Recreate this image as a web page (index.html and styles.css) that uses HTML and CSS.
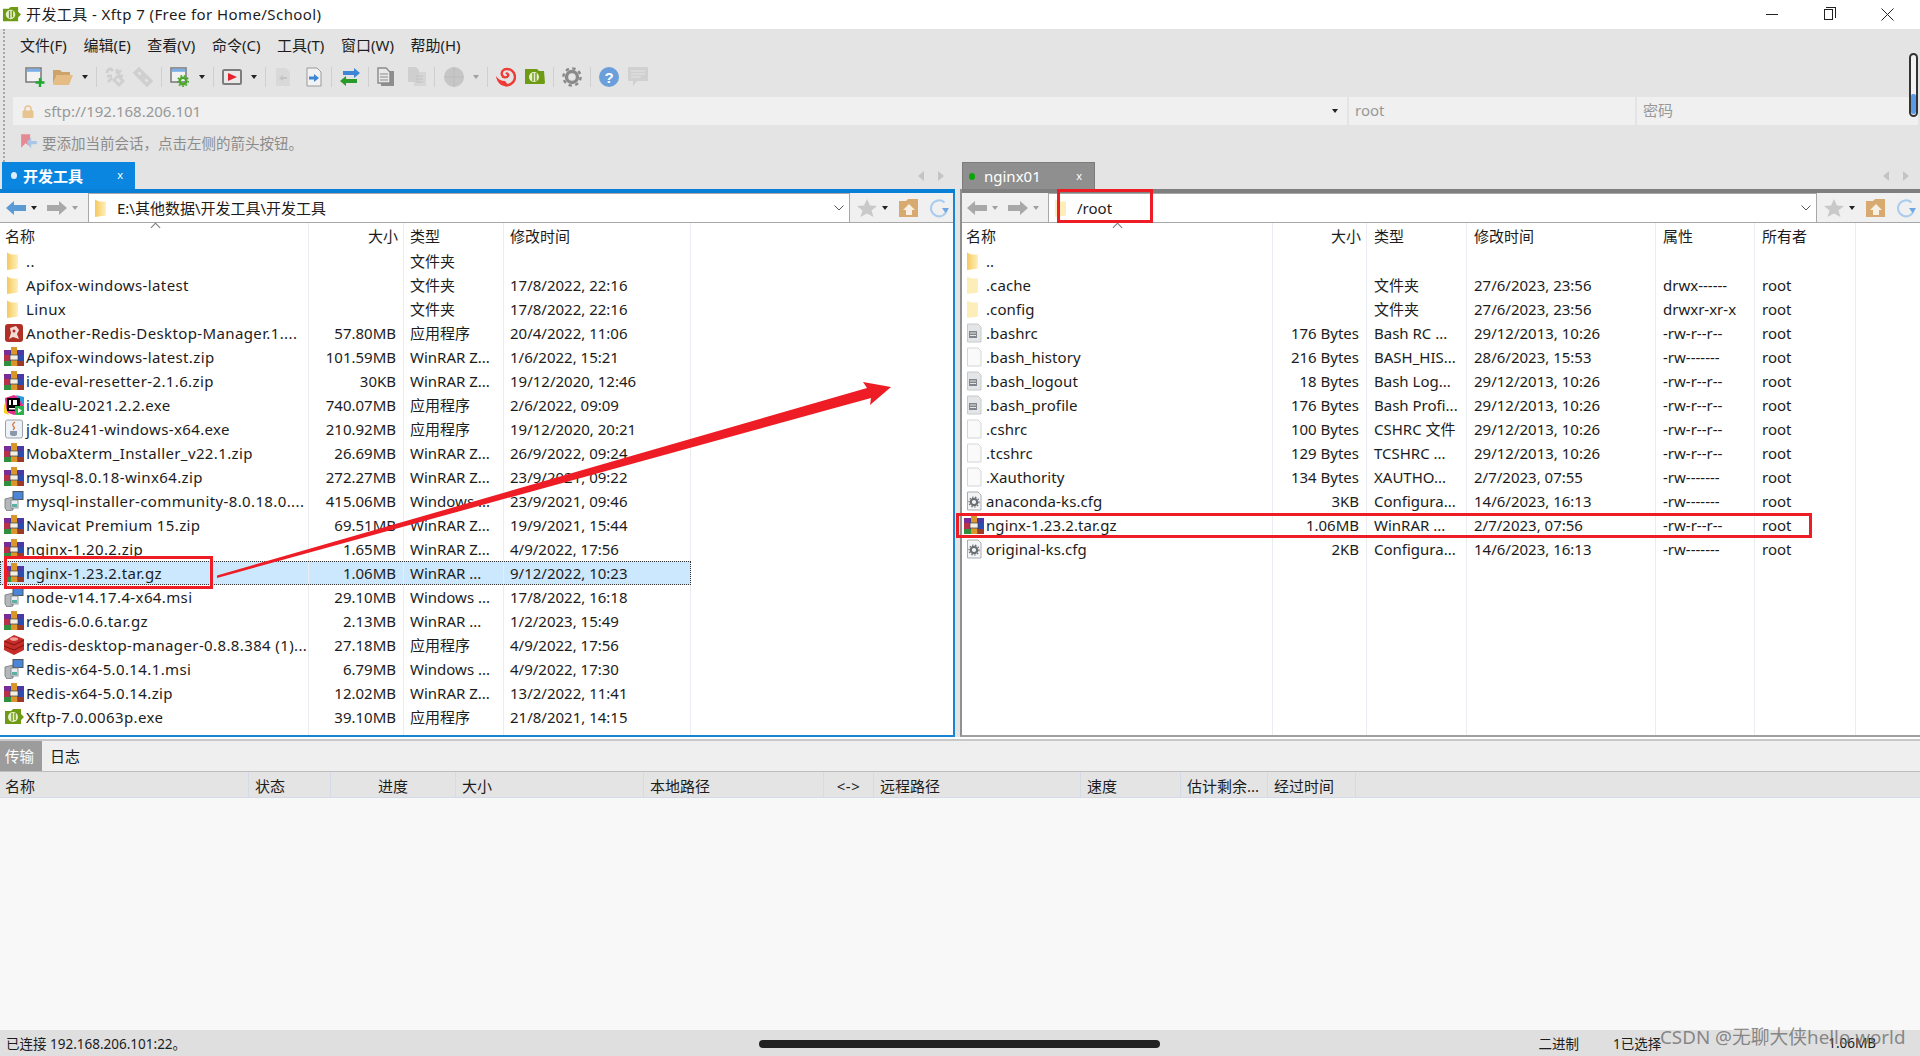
FILE: index.html
```html
<!DOCTYPE html>
<html>
<head>
  <title>开发工具 - Xftp 7 (Free for Home/School)</title>
  <meta charset="utf-8">
  <link rel="stylesheet" href="styles.css">
</head>
<body>
  <!-- shared icons -->
  <svg class="defs" width="0" height="0">
    <defs>
      <linearGradient id="fold" x1="0" x2="1" y1="0" y2="0"><stop offset="0" stop-color="#f5c95c"/><stop offset="1" stop-color="#fff0bd"/></linearGradient>
      <symbol id="folder" viewBox="0 0 20 20"><path d="M3 1.500 L7 3.500 L14 3.500 L14 17.500 L3 19 Z" fill="url(#fold)"/></symbol>
      <symbol id="folderpale" viewBox="0 0 20 20"><path d="M3 1.500 L7 3.500 L14 3.500 L14 17.500 L3 19 Z" fill="#fdeeb9"/></symbol>
      <symbol id="rar" viewBox="0 0 20 20">
        <rect x="0" y="3" width="20" height="5" fill="#4a3aa8"/><rect x="0" y="3" width="6" height="5" fill="#7b2d8f"/>
        <rect x="0" y="8" width="20" height="6" fill="#2b4cb0"/><rect x="0" y="8" width="6" height="6" fill="#b8304a"/>
        <rect x="0" y="14" width="20" height="5" fill="#2f8f3c"/><rect x="14" y="14" width="6" height="5" fill="#9c3a2a"/>
        <rect x="7" y="0" width="6" height="19" fill="#d9962c"/><rect x="6" y="8" width="8" height="5" fill="#f4efe0" stroke="#444" stroke-width=".7"/>
      </symbol>
      <symbol id="msi" viewBox="0 0 20 20">
        <path d="M1 8 L9 6 L9 19 L3 20 L1 17 Z" fill="#b4b8bc" stroke="#6c7075" stroke-width=".8"/>
        <rect x="9" y="0.500" width="10" height="8" fill="#4a86d8" stroke="#50565c"/>
        <rect x="7" y="9" width="7" height="8" fill="#e8edf0" stroke="#7b8085" stroke-width=".8"/><rect x="8" y="13" width="5" height="3" fill="#5cb0a0"/>
      </symbol>
      <symbol id="anotherredis" viewBox="0 0 20 20"><rect x="1" y="1" width="18" height="18" rx="3" fill="#b03028"/><path d="M6 5 L12 3 L15 7 L13 11 L15 16 L9 14 L5 16 L7 10 Z" fill="#f3dcd6"/><circle cx="10" cy="8" r="1.500" fill="#b03028"/></symbol>
      <symbol id="idea" viewBox="0 0 20 20"><path d="M1 3 L10 0 L19 4 L20 14 L10 20 L2 17 Z" fill="#e0308a"/><path d="M12 0 L20 2 L20 11 Z" fill="#2a9de0"/><path d="M0 8 L5 20 L0 18 Z" fill="#f7d020"/><rect x="3" y="3" width="13" height="13" fill="#000"/><rect x="5" y="5" width="2" height="5" fill="#fff"/><rect x="9" y="5" width="4" height="5" fill="#fff"/><rect x="5" y="13" width="6" height="1.500" fill="#fff"/><rect x="11" y="11" width="9" height="9" fill="#27b24a"/><path d="M14 13 L18 15.500 L14 18 Z" fill="#fff"/></symbol>
      <symbol id="jdk" viewBox="0 0 20 20"><rect x="1.500" y="1" width="17" height="18" rx="2" fill="#eef1f5" stroke="#9aa2ab"/><path d="M6 12 H13 V15 Q13 17 10 17 Q6 17 6 15 Z" fill="#8a97a8"/><path d="M11 3 Q7 6 10 8 Q11 9 9 11" fill="none" stroke="#d0763a" stroke-width="1.300"/></symbol>
      <symbol id="redisapp" viewBox="0 0 20 20"><path d="M10 0 L20 4 L20 15 L10 20 L0 15 L0 6 Z" fill="#c62c28"/><path d="M0 6 L10 10 L20 5 M0 11 L10 15 L20 10" fill="none" stroke="#7d1310" stroke-width="1"/><ellipse cx="10" cy="4" rx="4" ry="1.800" fill="#f2a39e"/></symbol>
      <symbol id="xftp" viewBox="0 0 20 20"><path d="M1 4 H7 L9 2 H17 V7 L20 10 L17 13 V17 H1 Z" fill="#6f9a14"/><circle cx="9" cy="10" r="5" fill="#e6efcc"/><path d="M8 6 V14 M11 6 V13" stroke="#6f9a14" stroke-width="1.400"/></symbol>
      <symbol id="doclines" viewBox="0 0 20 20"><path d="M3.500 1 H14 L17 4 V19 H3.500 Z" fill="#e3e5e7" stroke="#c6cacd"/><rect x="5" y="8" width="8" height="7" fill="#80868c"/><path d="M6 10 H12 M6 12.500 H12" stroke="#e3e5e7"/></symbol>
      <symbol id="docblank" viewBox="0 0 20 20"><path d="M3.500 1 H14 L17 4 V19 H3.500 Z" fill="#fafafa" stroke="#d3d6d9"/></symbol>
      <symbol id="doccfg" viewBox="0 0 20 20"><path d="M3.500 1 H14 L17 4 V19 H3.500 Z" fill="#f3f4f5" stroke="#a9adb1"/><circle cx="10" cy="11" r="3.200" fill="none" stroke="#6a6f75" stroke-width="2.200"/><circle cx="10" cy="11" r="5" fill="none" stroke="#6a6f75" stroke-width="1.200" stroke-dasharray="1.500 1.500"/></symbol>
      <symbol id="navback" viewBox="0 0 20 16"><path d="M0 8 L8 1 V5 H20 V11 H8 V15 Z"/></symbol>
      <symbol id="navfwd" viewBox="0 0 20 16"><path d="M20 8 L12 1 V5 H0 V11 H12 V15 Z"/></symbol>
      <symbol id="newsess" viewBox="0 0 20 20"><rect x="1" y="1" width="15" height="14" fill="#f2f2f2" stroke="#777" stroke-width="1.500"/><rect x="1.800" y="1.800" width="13.500" height="3" fill="#79aee8"/><path d="M15 11 V20 M10.500 15.500 H19.500" stroke="#22a82f" stroke-width="2.400"/></symbol>
      <symbol id="openfolder" viewBox="0 0 20 20"><path d="M0 3 H7 L9 5 H17 V8 H4 L0 17 Z" fill="#cda36a"/><path d="M4 8 H20 L16 18 H0 Z" fill="#e5bd84"/></symbol>
      <symbol id="unlink" viewBox="0 0 20 20"><g fill="none" stroke="#cfcfcf" stroke-width="2.800"><path d="M2 6 Q2 2 6 2 L8 4"/><path d="M12 2 L12 7 M16 3 L13 7 M18 9 L13 9"/><path d="M2 9 L7 9 M3 15 L7 11"/><path d="M9 13 L13 9 L18 14 L14 18 Z"/></g></symbol>
      <symbol id="links" viewBox="0 0 20 20"><g fill="none" stroke="#cfcfcf" stroke-width="3.200"><path d="M2 6 L6 2 L11 7 L7 11 Z"/><path d="M9 13 L13 9 L18 14 L14 18 Z"/></g></symbol>
      <symbol id="sessprop" viewBox="0 0 20 20"><rect x="1" y="1" width="15" height="14" fill="#f2f2f2" stroke="#777" stroke-width="1.500"/><rect x="1.800" y="1.800" width="13.500" height="3" fill="#79aee8"/><circle cx="13" cy="14" r="3.300" fill="none" stroke="#4aa82c" stroke-width="2.600"/><circle cx="13" cy="14" r="5.300" fill="none" stroke="#4aa82c" stroke-width="1.500" stroke-dasharray="1.800 1.800"/></symbol>
      <symbol id="play" viewBox="0 0 20 20"><rect x="1" y="3" width="18" height="14" rx="1.500" fill="#e9e9e9" stroke="#7d7d7d" stroke-width="2"/><path d="M6 6 L15 10 L6 14 Z" fill="#e4232f"/></symbol>
      <symbol id="docleft" viewBox="0 0 16 20"><path d="M1 1 H11 L15 5 V19 H1 Z" fill="#d9d9d9"/><path d="M4 11 L8 8 V10 H12 V12 H8 V14 Z" fill="#c4c4c4"/></symbol>
      <symbol id="docright" viewBox="0 0 16 20"><path d="M1 1 H11 L15 5 V19 H1 Z" fill="#f2f2f2" stroke="#9a9a9a"/><path d="M13 11 L8 7 V9.500 H3 V12.500 H8 V15 Z" fill="#3d86d6"/></symbol>
      <symbol id="swap" viewBox="0 0 20 20"><path d="M20 6 L14 1 V4 H3 V8 H14 V11 Z" fill="#3d86d6"/><path d="M0 14 L6 9 V12 H17 V16 H6 V19 Z" fill="#2a9a2a"/></symbol>
      <symbol id="copydark" viewBox="0 0 18 20"><rect x="4" y="4" width="13" height="15" fill="#8e8e8e"/><path d="M1 1 H9 L13 5 V16 H1 Z" fill="#e8e8e8" stroke="#8a8a8a" stroke-width="1.400"/><path d="M3 7 H11 M3 10 H11 M3 13 H11" stroke="#8a8a8a"/></symbol>
      <symbol id="copylite" viewBox="0 0 18 20"><rect x="6" y="5" width="12" height="14" fill="#d6d6d6"/><path d="M0 0 H8 L11 3 V15 H0 Z" fill="#cfcfcf"/><path d="M8 9 H15 M8 12 H15 M8 15 H15" stroke="#c2c2c2"/></symbol>
      <symbol id="globe" viewBox="0 0 20 20"><circle cx="10" cy="10" r="10" fill="#c6c6c6"/><path d="M10 0 V20 M0 10 H20" stroke="#bcbcbc"/></symbol>
      <symbol id="shell" viewBox="0 0 20 20"><path d="M0 9 C2 12 5 14 9 14 L13 19 C6 20.500 1 16 0 9 Z" fill="#ee3b36"/><path d="M9 18 C14 19 19 15 19 10 C19 5 15 2 11 2 C7 2 5 5 6 8 C7 11 11 11 12 9 C13 7 11 6 10 7" fill="none" stroke="#ee3b36" stroke-width="2.400"/></symbol>
      <symbol id="greenfolder" viewBox="0 0 20 20"><path d="M0 2 H12 L14 4 H19 L20 16 L19 17 H0 Z" fill="#6f9a14"/><circle cx="9" cy="10" r="5" fill="#e9f0d2"/><path d="M8 6 V14 M11 6 V14" stroke="#6f9a14" stroke-width="1.400"/></symbol>
      <symbol id="gear" viewBox="0 0 20 20"><circle cx="10" cy="10" r="5.500" fill="none" stroke="#8a8a8a" stroke-width="3.400"/><circle cx="10" cy="10" r="8.600" fill="none" stroke="#8a8a8a" stroke-width="2.400" stroke-dasharray="3.400 3.350"/></symbol>
      <symbol id="chat" viewBox="0 0 20 20"><path d="M1 0 H19 Q20 0 20 1 V13 Q20 14 19 14 H9 L5 19 V14 H1 Q0 14 0 13 V1 Q0 0 1 0 Z" fill="#d0d0d0"/><path d="M3 4 H17 M3 7 H17 M3 10 H13" stroke="#e4e4e4"/></symbol>
      <symbol id="star" viewBox="0 0 20 20"><path d="M10 1 L13 7.500 L20 8 L14.500 12.500 L16.500 19 L10 15.500 L3.500 19 L5.500 12.500 L0 8 L7 7.500 Z" fill="#c9c9c9"/></symbol>
      <symbol id="home" viewBox="0 0 20 20"><path d="M0 3 H7 L9 1 H19 V19 H0 Z" fill="#d8aa70"/><path d="M10 6 L16 12 H13 V17 H7 V12 H4 Z" fill="#f7f0e3"/></symbol>
      <symbol id="refresh" viewBox="0 0 20 20"><path d="M15.500 4.500 A8 8 0 1 0 18 11" fill="none" stroke="#a8cbee" stroke-width="2"/><path d="M13 10 H20 L16.500 15 Z" fill="#6ea8e4"/></symbol>
    </defs>
  </svg>

  <div class="app">
    <div class="titlebar">
      <svg class="title-icon"><use href="#xftp"/></svg>
      <span class="title-text">开发工具 - Xftp 7 (Free for Home/School)</span>
      <div class="window-btns">
        <span class="win-min"></span>
        <span class="win-max"></span>
        <svg class="win-close" viewBox="0 0 13 13"><path d="M0.500 0.500 L12.500 12.500 M12.500 0.500 L0.500 12.500" stroke="#222" fill="none"/></svg>
      </div>
    </div>

    <div class="chrome">
      <div class="chrome-inner">
        <div class="menubar">
          <span>文件(F)</span><span>编辑(E)</span><span>查看(V)</span><span>命令(C)</span><span>工具(T)</span><span>窗口(W)</span><span>帮助(H)</span>
        </div>
        <div class="toolbar">
          <svg class="tool t1"><use href="#newsess"/></svg>
          <svg class="tool t2"><use href="#openfolder"/></svg><i class="drop"></i><b class="sep"></b>
          <svg class="tool"><use href="#unlink"/></svg><svg class="tool t3"><use href="#links"/></svg><b class="sep"></b>
          <svg class="tool"><use href="#sessprop"/></svg><i class="drop"></i><b class="sep"></b>
          <svg class="tool"><use href="#play"/></svg><i class="drop"></i><b class="sep"></b>
          <svg class="tool thin"><use href="#docleft"/></svg><svg class="tool thin t4"><use href="#docright"/></svg><b class="sep"></b>
          <svg class="tool"><use href="#swap"/></svg><b class="sep"></b>
          <svg class="tool thin"><use href="#copydark"/></svg><svg class="tool thin t4"><use href="#copylite"/></svg><b class="sep"></b>
          <svg class="tool t6"><use href="#globe"/></svg><i class="drop gray"></i><b class="sep"></b>
          <svg class="tool"><use href="#shell"/></svg><svg class="tool t5"><use href="#greenfolder"/></svg><b class="sep"></b>
          <svg class="tool"><use href="#gear"/></svg><b class="sep"></b>
          <svg class="tool help" viewBox="0 0 20 20"><circle cx="10" cy="10" r="10" fill="#6a9fdc"/><text x="10" y="15.500" text-anchor="middle" class="help-mark">?</text></svg>
          <svg class="tool t5"><use href="#chat"/></svg>
        </div>
        <div class="addressbar">
          <div class="addr-host">
            <svg class="lock" viewBox="0 0 12 13"><path d="M3 6 V4 A3 3 0 0 1 9 4 V6" fill="none" stroke="#e8c48f" stroke-width="1.600"/><rect x="0.500" y="5.500" width="11" height="7.500" rx="1" fill="#e8c48f"/></svg>
            <span>sftp://192.168.206.101</span>
            <i class="drop dark"></i>
          </div>
          <div class="addr-user">root</div>
          <div class="addr-pass">密码</div>
        </div>
        <div class="hintbar">
          <svg class="hint-icon" viewBox="0 0 16 16"><path d="M1 1 H9 V12 L5 9 L1 13 Z" fill="#e58a92"/><path d="M6 8 L10 4 V7 H15 V10 H10 V14 Z" fill="#a9c6e6"/></svg>
          <span>要添加当前会话，点击左侧的箭头按钮。</span>
        </div>
      </div>
    </div>

    <div class="panels">
      <section class="panel panel-left">
        <div class="tabstrip">
          <div class="tab active"><i class="dot"></i><span>开发工具</span><em>x</em></div>
          <div class="tab-arrows"><i class="arr-l"></i><i class="arr-r"></i></div>
        </div>
        <div class="strip"></div>
        <div class="pathbar">
          <div class="nav">
            <svg class="nav-back blue"><use href="#navback"/></svg><i class="drop dark small"></i>
            <svg class="nav-fwd"><use href="#navfwd"/></svg><i class="drop gray small"></i>
          </div>
          <div class="pathfield">
            <svg class="path-folder"><use href="#folder"/></svg>
            <span>E:\其他数据\开发工具\开发工具</span>
            <svg class="chev" viewBox="0 0 10 6"><path d="M0.500 0.500 L5 5 L9.500 0.500" fill="none" stroke="#555"/></svg>
          </div>
          <div class="path-tools">
            <svg class="pt"><use href="#star"/></svg><i class="drop dark small"></i>
            <svg class="pt"><use href="#home"/></svg><svg class="pt"><use href="#refresh"/></svg>
          </div>
        </div>
        <div class="filelist">
          <div class="row head"><span class="name">名称<i class="sort"></i></span><span class="size">大小</span><span>类型</span><span>修改时间</span></div>
          <div class="row"><span class="name"><svg class="ico"><use href="#folder"/></svg>..</span><span class="size"></span><span>文件夹</span><span></span></div>
          <div class="row"><span class="name"><svg class="ico"><use href="#folder"/></svg>Apifox-windows-latest</span><span class="size"></span><span>文件夹</span><span>17/8/2022, 22:16</span></div>
          <div class="row"><span class="name"><svg class="ico"><use href="#folder"/></svg>Linux</span><span class="size"></span><span>文件夹</span><span>17/8/2022, 22:16</span></div>
          <div class="row"><span class="name"><svg class="ico"><use href="#anotherredis"/></svg>Another-Redis-Desktop-Manager.1....</span><span class="size">57.80MB</span><span>应用程序</span><span>20/4/2022, 11:06</span></div>
          <div class="row"><span class="name"><svg class="ico"><use href="#rar"/></svg>Apifox-windows-latest.zip</span><span class="size">101.59MB</span><span>WinRAR Z...</span><span>1/6/2022, 15:21</span></div>
          <div class="row"><span class="name"><svg class="ico"><use href="#rar"/></svg>ide-eval-resetter-2.1.6.zip</span><span class="size">30KB</span><span>WinRAR Z...</span><span>19/12/2020, 12:46</span></div>
          <div class="row"><span class="name"><svg class="ico"><use href="#idea"/></svg>idealU-2021.2.2.exe</span><span class="size">740.07MB</span><span>应用程序</span><span>2/6/2022, 09:09</span></div>
          <div class="row"><span class="name"><svg class="ico"><use href="#jdk"/></svg>jdk-8u241-windows-x64.exe</span><span class="size">210.92MB</span><span>应用程序</span><span>19/12/2020, 20:21</span></div>
          <div class="row"><span class="name"><svg class="ico"><use href="#rar"/></svg>MobaXterm_Installer_v22.1.zip</span><span class="size">26.69MB</span><span>WinRAR Z...</span><span>26/9/2022, 09:24</span></div>
          <div class="row"><span class="name"><svg class="ico"><use href="#rar"/></svg>mysql-8.0.18-winx64.zip</span><span class="size">272.27MB</span><span>WinRAR Z...</span><span>23/9/2021, 09:22</span></div>
          <div class="row"><span class="name"><svg class="ico"><use href="#msi"/></svg>mysql-installer-community-8.0.18.0....</span><span class="size">415.06MB</span><span>Windows ...</span><span>23/9/2021, 09:46</span></div>
          <div class="row"><span class="name"><svg class="ico"><use href="#rar"/></svg>Navicat Premium 15.zip</span><span class="size">69.51MB</span><span>WinRAR Z...</span><span>19/9/2021, 15:44</span></div>
          <div class="row"><span class="name"><svg class="ico"><use href="#rar"/></svg>nginx-1.20.2.zip</span><span class="size">1.65MB</span><span>WinRAR Z...</span><span>4/9/2022, 17:56</span></div>
          <div class="row selected"><span class="name"><svg class="ico"><use href="#rar"/></svg>nginx-1.23.2.tar.gz</span><span class="size">1.06MB</span><span>WinRAR ...</span><span>9/12/2022, 10:23</span></div>
          <div class="row"><span class="name"><svg class="ico"><use href="#msi"/></svg>node-v14.17.4-x64.msi</span><span class="size">29.10MB</span><span>Windows ...</span><span>17/8/2022, 16:18</span></div>
          <div class="row"><span class="name"><svg class="ico"><use href="#rar"/></svg>redis-6.0.6.tar.gz</span><span class="size">2.13MB</span><span>WinRAR ...</span><span>1/2/2023, 15:49</span></div>
          <div class="row"><span class="name"><svg class="ico"><use href="#redisapp"/></svg>redis-desktop-manager-0.8.8.384 (1)...</span><span class="size">27.18MB</span><span>应用程序</span><span>4/9/2022, 17:56</span></div>
          <div class="row"><span class="name"><svg class="ico"><use href="#msi"/></svg>Redis-x64-5.0.14.1.msi</span><span class="size">6.79MB</span><span>Windows ...</span><span>4/9/2022, 17:30</span></div>
          <div class="row"><span class="name"><svg class="ico"><use href="#rar"/></svg>Redis-x64-5.0.14.zip</span><span class="size">12.02MB</span><span>WinRAR Z...</span><span>13/2/2022, 11:41</span></div>
          <div class="row"><span class="name"><svg class="ico"><use href="#xftp"/></svg>Xftp-7.0.0063p.exe</span><span class="size">39.10MB</span><span>应用程序</span><span>21/8/2021, 14:15</span></div>
          <div class="row filler"><span></span><span></span><span></span><span></span></div>
        </div>
      </section>

      <section class="panel panel-right">
        <div class="tabstrip">
          <div class="tab remote"><i class="dot"></i><span>nginx01</span><em>x</em></div>
          <div class="tab-arrows"><i class="arr-l"></i><i class="arr-r"></i></div>
        </div>
        <div class="strip"></div>
        <div class="pathbar">
          <div class="nav">
            <svg class="nav-back"><use href="#navback"/></svg><i class="drop gray small"></i>
            <svg class="nav-fwd"><use href="#navfwd"/></svg><i class="drop gray small"></i>
          </div>
          <div class="pathfield">
            <svg class="path-folder"><use href="#folderpale"/></svg>
            <span>/root</span>
            <svg class="chev" viewBox="0 0 10 6"><path d="M0.500 0.500 L5 5 L9.500 0.500" fill="none" stroke="#555"/></svg>
          </div>
          <div class="path-tools">
            <svg class="pt"><use href="#star"/></svg><i class="drop dark small"></i>
            <svg class="pt"><use href="#home"/></svg><svg class="pt"><use href="#refresh"/></svg>
          </div>
        </div>
        <div class="filelist">
          <div class="row head"><span class="name">名称<i class="sort"></i></span><span class="size">大小</span><span>类型</span><span>修改时间</span><span>属性</span><span>所有者</span></div>
          <div class="row"><span class="name"><svg class="ico"><use href="#folder"/></svg>..</span><span class="size"></span><span></span><span></span><span></span><span></span></div>
          <div class="row"><span class="name"><svg class="ico"><use href="#folderpale"/></svg>.cache</span><span class="size"></span><span>文件夹</span><span>27/6/2023, 23:56</span><span>drwx------</span><span>root</span></div>
          <div class="row"><span class="name"><svg class="ico"><use href="#folderpale"/></svg>.config</span><span class="size"></span><span>文件夹</span><span>27/6/2023, 23:56</span><span>drwxr-xr-x</span><span>root</span></div>
          <div class="row"><span class="name"><svg class="ico"><use href="#doclines"/></svg>.bashrc</span><span class="size">176 Bytes</span><span>Bash RC ...</span><span>29/12/2013, 10:26</span><span>-rw-r--r--</span><span>root</span></div>
          <div class="row"><span class="name"><svg class="ico"><use href="#docblank"/></svg>.bash_history</span><span class="size">216 Bytes</span><span>BASH_HIS...</span><span>28/6/2023, 15:53</span><span>-rw-------</span><span>root</span></div>
          <div class="row"><span class="name"><svg class="ico"><use href="#doclines"/></svg>.bash_logout</span><span class="size">18 Bytes</span><span>Bash Log...</span><span>29/12/2013, 10:26</span><span>-rw-r--r--</span><span>root</span></div>
          <div class="row"><span class="name"><svg class="ico"><use href="#doclines"/></svg>.bash_profile</span><span class="size">176 Bytes</span><span>Bash Profi...</span><span>29/12/2013, 10:26</span><span>-rw-r--r--</span><span>root</span></div>
          <div class="row"><span class="name"><svg class="ico"><use href="#docblank"/></svg>.cshrc</span><span class="size">100 Bytes</span><span>CSHRC 文件</span><span>29/12/2013, 10:26</span><span>-rw-r--r--</span><span>root</span></div>
          <div class="row"><span class="name"><svg class="ico"><use href="#docblank"/></svg>.tcshrc</span><span class="size">129 Bytes</span><span>TCSHRC ...</span><span>29/12/2013, 10:26</span><span>-rw-r--r--</span><span>root</span></div>
          <div class="row"><span class="name"><svg class="ico"><use href="#docblank"/></svg>.Xauthority</span><span class="size">134 Bytes</span><span>XAUTHO...</span><span>2/7/2023, 07:55</span><span>-rw-------</span><span>root</span></div>
          <div class="row"><span class="name"><svg class="ico"><use href="#doccfg"/></svg>anaconda-ks.cfg</span><span class="size">3KB</span><span>Configura...</span><span>14/6/2023, 16:13</span><span>-rw-------</span><span>root</span></div>
          <div class="row"><span class="name"><svg class="ico"><use href="#rar"/></svg>nginx-1.23.2.tar.gz</span><span class="size">1.06MB</span><span>WinRAR ...</span><span>2/7/2023, 07:56</span><span>-rw-r--r--</span><span>root</span></div>
          <div class="row"><span class="name"><svg class="ico"><use href="#doccfg"/></svg>original-ks.cfg</span><span class="size">2KB</span><span>Configura...</span><span>14/6/2023, 16:13</span><span>-rw-------</span><span>root</span></div>
          <div class="row filler"><span></span><span></span><span></span><span></span><span></span><span></span></div>
        </div>
      </section>
    </div>

    <div class="transfers">
      <div class="transfer-tabs"><span class="on">传输</span><span>日志</span></div>
      <div class="transfer-head">
        <span>名称</span><span>状态</span><span class="right">进度</span><span>大小</span><span>本地路径</span><span class="center">&lt;-&gt;</span><span>远程路径</span><span>速度</span><span>估计剩余...</span><span>经过时间</span>
      </div>
      <div class="transfer-body"></div>
    </div>

    <div class="statusbar">
      <span class="status-msg">已连接 192.168.206.101:22。</span>
      <span class="st-mode">二进制</span>
      <span class="st-sel">1已选择</span>
      <span class="st-size">1.06MB</span>
    </div>
  </div>

  <!-- things drawn over the screenshot -->
  <div class="mark box-left"></div>
  <div class="mark box-root"></div>
  <div class="mark box-row"></div>
  <svg class="big-arrow" viewBox="0 0 1920 1056"><polygon points="217,575.500 867,388 863,382 891,387 870,405 871,398 217,578" fill="#ee1c25"/></svg>
  <div class="side-scroll"><i></i></div>
  <div class="home-bar"></div>
  <div class="watermark">CSDN @无聊大侠hello world</div>
</body>
</html>
```

FILE: styles.css
```css
* {
  box-sizing: border-box;
}

html, body {
  margin: 0;
  height: 100%;
  overflow: hidden;
}

body {
  position: relative;
  font-family: "Noto Sans", "Noto Sans CJK SC", sans-serif;
  font-size: 15px;
  color: #1c1c1c;
  background: #fff;
}

.defs {
  position: absolute;
}

.app {
  display: flex;
  flex-direction: column;
  height: 1056px;
}

/* title bar */
.titlebar {
  display: flex;
  align-items: center;
  height: 29px;
  padding-left: 2px;
  background: #fff;
}

.title-icon {
  width: 19px;
  height: 19px;
}

.title-text {
  margin-left: 5px;
  line-height: 29px;
  letter-spacing: 0.420px;
}

.window-btns {
  display: flex;
  align-items: center;
  margin-left: auto;
  padding-right: 26px;
}

.win-min {
  width: 12px;
  height: 1px;
  background: #222;
}

.win-max {
  position: relative;
  width: 9px;
  height: 11px;
  margin: 0 48px 0 46px;
  border: 1px solid #222;
}

.win-max::after {
  content: "";
  position: absolute;
  top: -3px;
  left: 1px;
  width: 9px;
  height: 10px;
  border-top: 1px solid #222;
  border-right: 1px solid #222;
}

.win-close {
  width: 13px;
  height: 13px;
}

/* menu, toolbar, address */
.chrome {
  height: 133px;
  padding: 0 2px 0 3px;
  background: #e4e4e4;
}

.chrome-inner {
  height: 100%;
  border-left: 2px dotted #a8a8a8;
}

.menubar {
  display: flex;
  gap: 16.600px;
  height: 30px;
  padding-left: 15px;
  align-items: center;
}

.toolbar {
  display: flex;
  align-items: center;
  height: 33px;
  margin-top: 1px;
  margin-bottom: 4px;
  padding-left: 20px;
}

.tool {
  flex: none;
  width: 20px;
  height: 20px;
}

.tool.thin {
  width: 18px;
}

.t1 {
  margin-right: 8px;
}

.t3 {
  margin-left: 8px;
}

.t4 {
  margin-left: 13px;
}

.t5 {
  margin-left: 9px;
}

.t6 {
  margin-left: 1px;
}

.help-mark {
  font-family: "Liberation Sans", sans-serif;
  font-size: 15px;
  font-weight: 700;
  fill: #fff;
}

.drop {
  flex: none;
  width: 0;
  height: 0;
  margin-left: 9px;
  border-left: 3px solid transparent;
  border-right: 3px solid transparent;
  border-top: 4px solid #222;
}

.drop.gray {
  border-top-color: #a0a0a0;
}

.drop.small {
  margin-left: 5px;
}

.sep {
  flex: none;
  width: 1px;
  height: 20px;
  margin: 0 8px;
  background: #cfcfcf;
}

.addressbar {
  display: flex;
  height: 28px;
  margin-left: 8px;
  gap: 2px;
  color: #989898;
  line-height: 28px;
}

.addressbar > div {
  background: #f0f0f0;
}

.addr-host {
  display: flex;
  align-items: center;
  width: 1334px;
  padding-left: 9px;
}

.addr-host span {
  margin-left: 10px;
}

.lock {
  width: 12px;
  height: 13px;
}

.drop.dark {
  margin-left: auto;
  margin-right: 9px;
  border-top-color: #222;
}

.drop.dark.small {
  margin: 0 0 0 5px;
}

.addr-user {
  width: 286px;
  padding-left: 6px;
  line-height: 27px;
}

.addr-pass {
  flex: 1;
  padding-left: 6px;
  line-height: 27px;
}

.hintbar {
  display: flex;
  align-items: center;
  height: 37px;
  padding: 0 0 3px 15px;
  color: #8c8c8c;
  font-size: 14.500px;
}

.hint-icon {
  width: 18px;
  height: 18px;
  margin-right: 4px;
}

/* file panels */
.panels {
  display: flex;
  height: 575px;
  background: #e4e4e4;
}

.panel {
  display: flex;
  flex-direction: column;
}

.panel-left {
  width: 955px;
  border-right: 2px solid #1a84d4;
  border-bottom: 2px solid #1a84d4;
}

.panel-right {
  width: 960px;
  margin-left: 5px;
  border-left: 2px solid #909090;
  border-bottom: 2px solid #a0a0a0;
}

.panel-right .filelist .row {
  grid-template-columns: 311px 94px 100px 189px 99px 101px 1fr;
}

.panel-right .row > span {
  padding-left: 7px;
}

.panel-right .row .name {
  letter-spacing: 0.100px;
}

.panel-left .row .name {
  letter-spacing: 0.380px;
}

.tabstrip {
  display: flex;
  height: 27px;
  background: #e4e4e4;
}

.panel-left .tabstrip {
  margin-right: -2px;
  padding-left: 2px;
}

.panel-right .tabstrip {
  margin-left: -2px;
  padding-left: 2px;
}

.tab {
  display: flex;
  align-items: center;
  position: relative;
  width: 133px;
  height: 27px;
  padding-left: 21px;
  color: #fff;
}

.tab.active {
  background: #0a86e0;
  font-weight: 700;
}

.tab.remote {
  background: #8f8f8f;
  border: 1px solid #7c7c7c;
  border-bottom: none;
}

.tab .dot {
  position: absolute;
  left: 9px;
  top: 10px;
  width: 6px;
  height: 7px;
  border-radius: 50%;
  background: #dceefc;
}

.tab.remote .dot {
  left: 6px;
  background: #0aa50a;
}

.tab em {
  position: absolute;
  right: 12px;
  top: 5px;
  font-style: normal;
  font-weight: 400;
  font-size: 11px;
}

.tab-arrows {
  display: flex;
  gap: 14px;
  margin-left: auto;
  padding: 9px 11px 0 0;
}

.tab-arrows i {
  width: 0;
  height: 0;
  border-top: 5px solid transparent;
  border-bottom: 5px solid transparent;
}

.arr-l {
  border-right: 6px solid #c4c4c4;
}

.arr-r {
  border-left: 6px solid #c4c4c4;
}

.strip {
  height: 4px;
  background: #0a7fd6;
}

.panel-left .strip {
  margin-right: -2px;
}

.panel-right .strip {
  background: #7f7f7f;
}

.pathbar {
  display: flex;
  height: 29px;
  background: #f0f0f0;
  line-height: 27px;
}

.nav {
  display: flex;
  align-items: center;
  width: 88px;
  padding-left: 6px;
}

.panel-right .nav {
  width: 86px;
  padding-left: 5px;
}

.nav-back, .nav-fwd {
  width: 20px;
  height: 16px;
  fill: #a8a8a8;
}

.nav-back.blue {
  fill: #5b9bd5;
}

.nav-fwd {
  margin-left: 10px;
}

.pathfield {
  display: flex;
  flex: 1;
  align-items: center;
  height: 29px;
  padding-left: 3px;
  background: #fff;
  border: 1px solid #a8a8a8;
  border-bottom: none;
}

.path-folder {
  width: 20px;
  height: 20px;
}

.pathfield span {
  margin-left: 5px;
}

.chev {
  width: 10px;
  height: 6px;
  margin-left: auto;
  margin-right: 5px;
}

.path-tools {
  display: flex;
  align-items: center;
  width: 103px;
  padding-left: 7px;
}

.pt {
  width: 20px;
  height: 20px;
}

.pt + .pt {
  margin-left: 10px;
}

.drop + .pt {
  margin-left: 11px;
}

.filelist {
  display: flex;
  flex: 1;
  flex-direction: column;
  background: #fff;
  border-top: 1px solid #a8a8a8;
}

.row {
  display: grid;
  grid-template-columns: 309px 95px 100px 187px 1fr;
  flex: none;
  height: 24px;
  line-height: 24px;
}

.row > span {
  padding-left: 6px;
  white-space: nowrap;
  overflow: hidden;
  border-right: 1px solid #e9edf2;
}

.row .name {
  display: flex;
  align-items: center;
  padding-left: 4px;
  overflow: visible;
}

.row .size {
  padding: 0 7px 0 0;
  text-align: right;
}

.panel-right .row .size {
  padding: 0 7px 0 0;
}

.panel-right .row .name {
  padding-left: 2px;
}

.row.head {
  position: relative;
  height: 26px;
  line-height: 26px;
}

.row.head .name {
  position: relative;
  padding-left: 5px;
  letter-spacing: 0;
}

.panel-right .row.head .name {
  padding-left: 4px;
  letter-spacing: 0;
}

.row.head .size {
  padding-right: 5px;
}

.panel-right .row.head .size {
  padding-right: 5px;
}

.sort {
  position: absolute;
  left: 152px;
  top: 1px;
  width: 7px;
  height: 7px;
  border-top: 1px solid #777;
  border-left: 1px solid #777;
  transform: rotate(45deg);
}

.row.selected {
  width: 691px;
  background: #cce8ff;
  outline: 1px dotted #333;
  outline-offset: -1px;
}

.row.filler {
  flex: 1;
  height: auto;
}

.ico {
  flex: none;
  width: 20px;
  height: 20px;
  margin-right: 2px;
}

/* transfer area */
.transfers {
  display: flex;
  flex: 1;
  flex-direction: column;
  border-top: 2px solid #c8c8c8;
  margin-top: 2px;
}

.transfer-tabs {
  display: flex;
  height: 30px;
  background: #efefef;
  line-height: 30px;
}

.transfer-tabs span {
  padding-left: 8px;
  white-space: nowrap;
}

.transfer-tabs .on {
  width: 42px;
  padding-left: 5px;
  background: #9c9c9c;
  color: #fff;
  font-size: 14.500px;
}

.transfer-head {
  display: grid;
  grid-template-columns: 249px 82px 125px 188px 180px 50px 207px 100px 87px 88px;
  height: 27px;
  background: #e4e4e4;
  border-top: 1px solid #bdbdbd;
  border-bottom: 1px solid #d3dbe8;
  line-height: 28px;
}

.transfer-head span {
  padding-left: 6px;
  border-right: 1px solid #d3dbe8;
  white-space: nowrap;
}

.transfer-head span:first-child {
  padding-left: 5px;
}

.transfer-head .right {
  padding-right: 47px;
  text-align: right;
}

.transfer-head .center {
  padding-left: 0;
  text-align: center;
  letter-spacing: 0.500px;
}

.transfer-body {
  flex: 1;
  background: #f8f8f8;
}

.statusbar {
  display: flex;
  align-items: center;
  height: 26px;
  padding-left: 6px;
  background: #dfdfdf;
  font-size: 13.500px;
}

.st-mode {
  margin-left: auto;
  margin-right: 34px;
}

.st-sel {
  margin-right: 167px;
}

.st-size {
  margin-right: 44px;
}

/* red markers and other overlays */
.mark {
  position: absolute;
  border: 3px solid #ee1c25;
}

.box-left {
  left: 4px;
  top: 556px;
  width: 209px;
  height: 33px;
}

.box-root {
  left: 1057px;
  top: 189px;
  width: 96px;
  height: 34px;
}

.box-row {
  left: 956px;
  top: 513px;
  width: 856px;
  height: 25px;
}

.big-arrow {
  position: absolute;
  left: 0;
  top: 0;
  width: 1920px;
  height: 1056px;
  pointer-events: none;
}

.side-scroll {
  position: absolute;
  left: 1909px;
  top: 53px;
  width: 9px;
  height: 64px;
  padding-top: 39px;
  border: 2px solid #333;
  border-radius: 5px;
  background: #f2f2f2;
}

.side-scroll i {
  display: block;
  height: 20px;
  background: #5a9be8;
  border-radius: 2px;
}

.home-bar {
  position: absolute;
  left: 759px;
  top: 1040px;
  width: 401px;
  height: 8px;
  border-radius: 4px;
  background: #222;
}

.watermark {
  position: absolute;
  left: 1660px;
  top: 1024px;
  color: rgba(110, 110, 110, 0.8);
  font-size: 18.800px;
  line-height: 26px;
  white-space: nowrap;
}
```
